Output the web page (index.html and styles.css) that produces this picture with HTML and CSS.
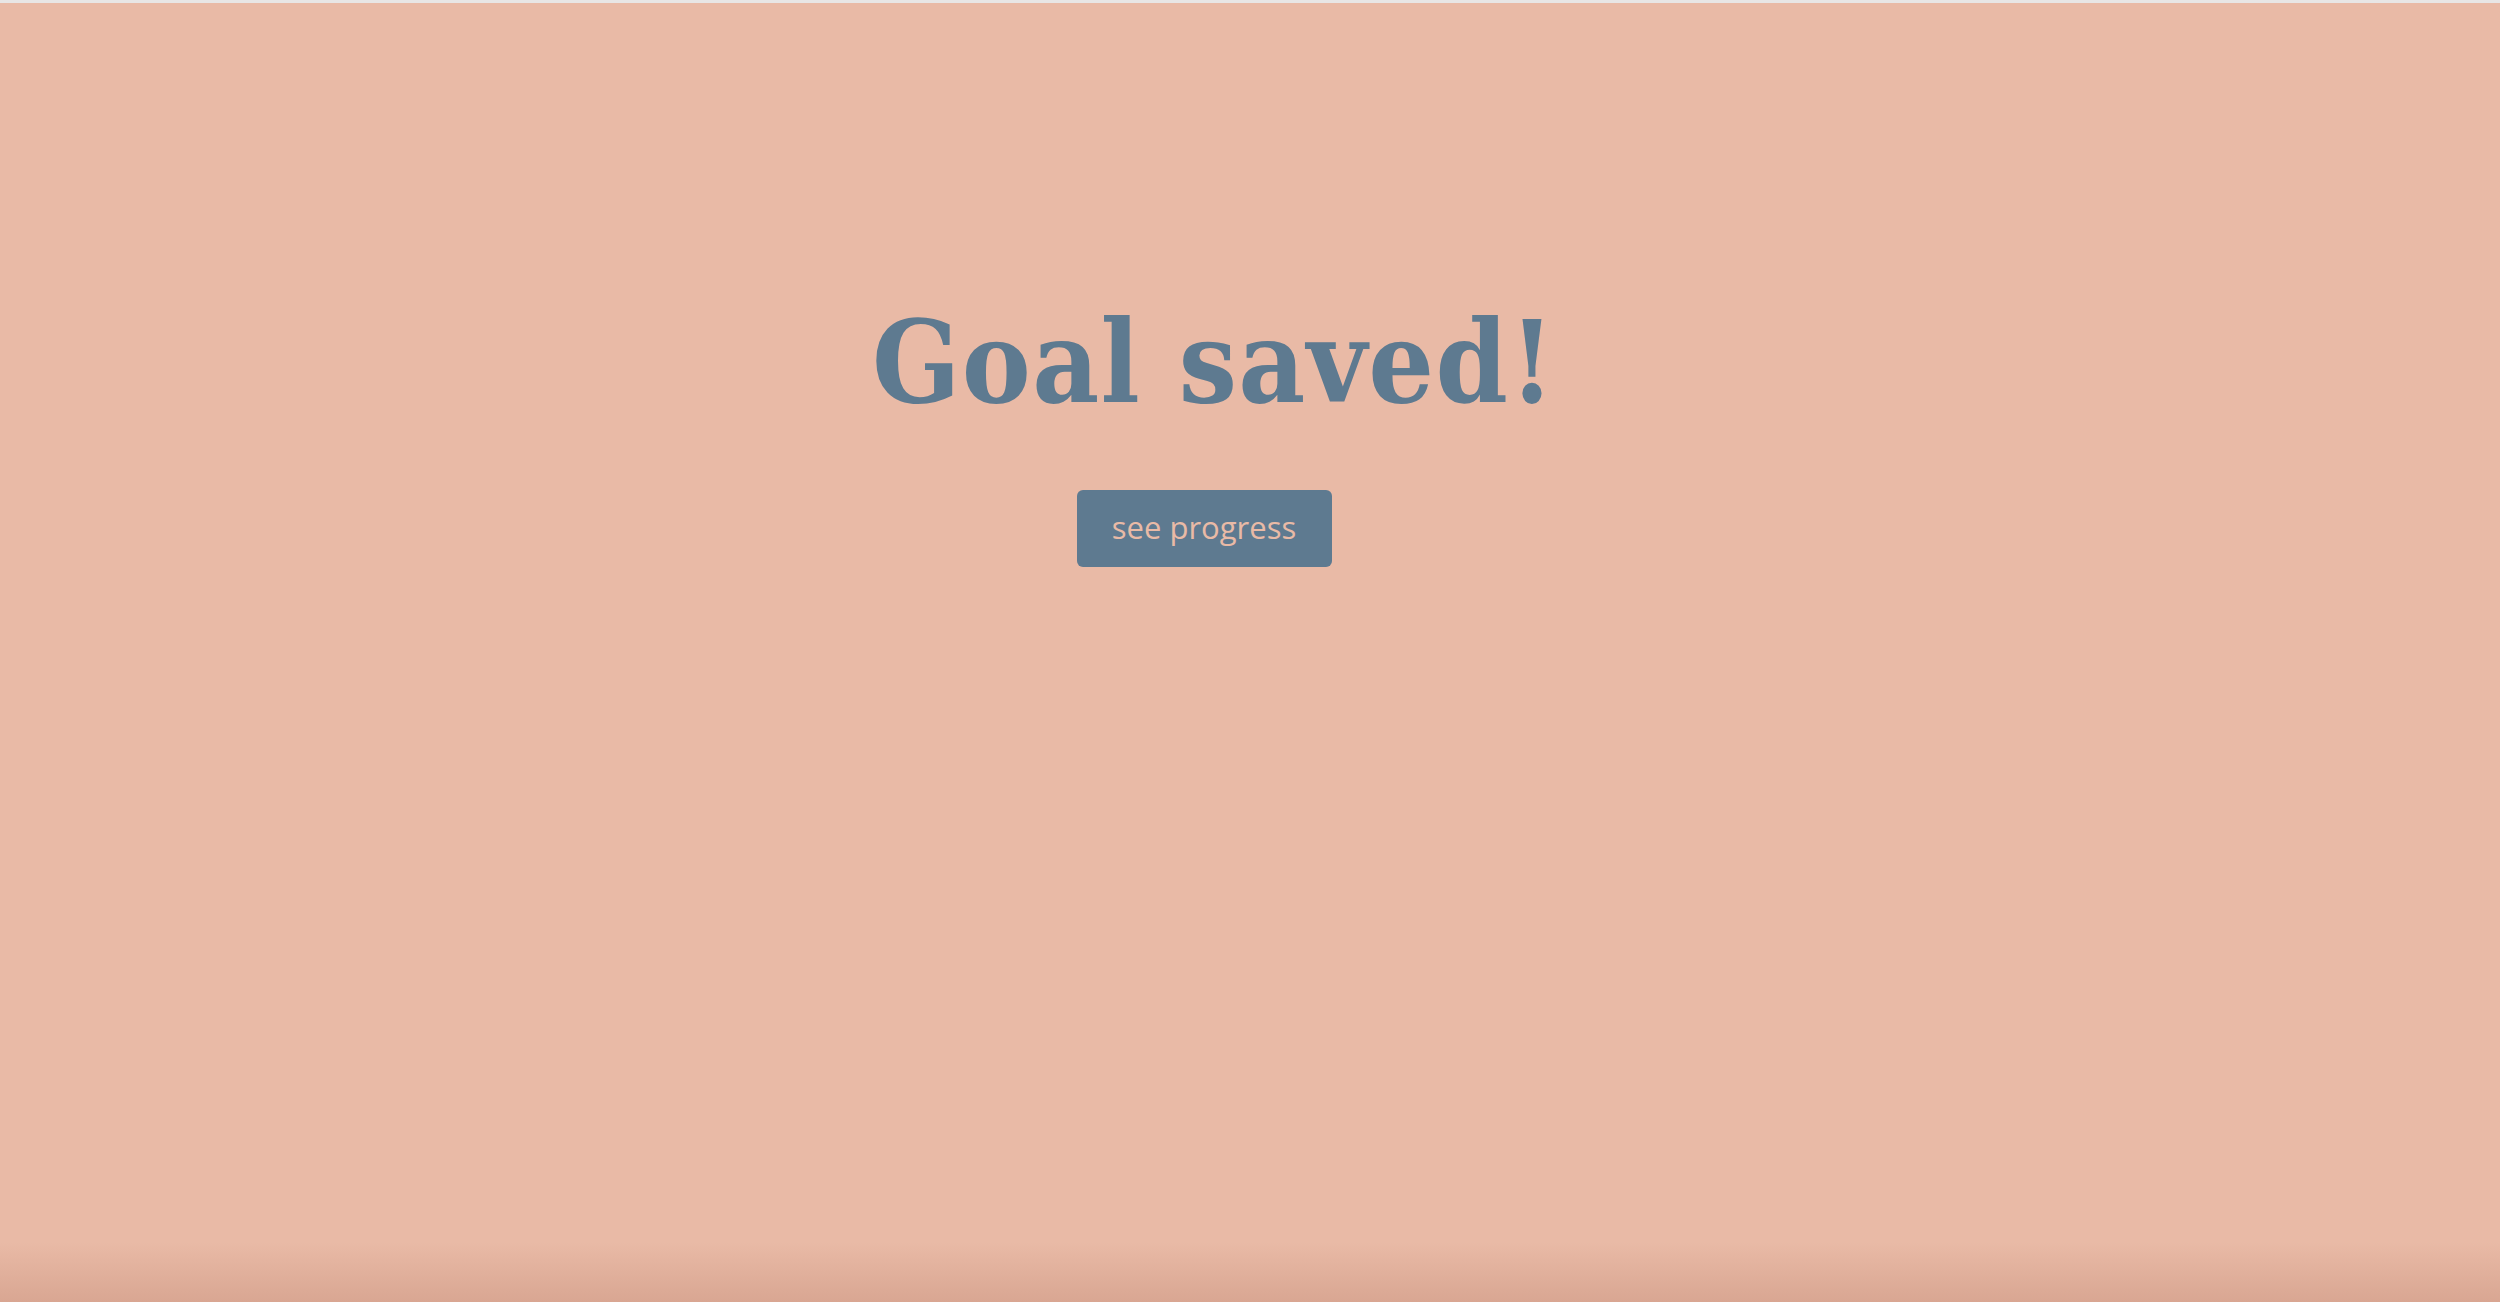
FILE: index.html
```html
<!DOCTYPE html>
<html>
<head>
<meta charset="utf-8">
<link rel="stylesheet" href="styles.css">
</head>
<body>
<div class="page">
  <main class="content">
    <h1 class="title">Goal saved!</h1>
    <button class="btn">see progress</button>
  </main>
</div>
</body>
</html>
```
FILE: styles.css
```css
html, body {
  margin: 0;
  padding: 0;
  height: 100%;
}
body {
  background: #e9baa6;
}
.page {
  box-sizing: border-box;
  height: 1302px;
  border-top: 3px solid #e8e6e5;
  background:
    linear-gradient(to bottom, rgba(175, 115, 95, 0) 0, rgba(175, 115, 95, 0) calc(100% - 60px), rgba(175, 115, 95, 0.28) 100%),
    #e9baa6;
}
.content {
  display: flex;
  flex-direction: column;
  align-items: center;
  padding-top: 296px;
  padding-right: 92px;
}
.title {
  margin: 0 0 0 20px;
  font-family: "DejaVu Serif Condensed", "DejaVu Serif", serif;
  font-weight: bold;
  font-size: 115px;
  line-height: 126px;
  color: #5e7a90;
  letter-spacing: 1.4px;
}
.btn {
  margin-top: 65px;
  width: 255px;
  height: 77px;
  border: none;
  border-radius: 6px;
  background: #5e7a90;
  color: #e9baa6;
  font-family: "Open Sans", sans-serif;
  font-size: 31px;
  padding: 0 0 4px 0;
}
```
